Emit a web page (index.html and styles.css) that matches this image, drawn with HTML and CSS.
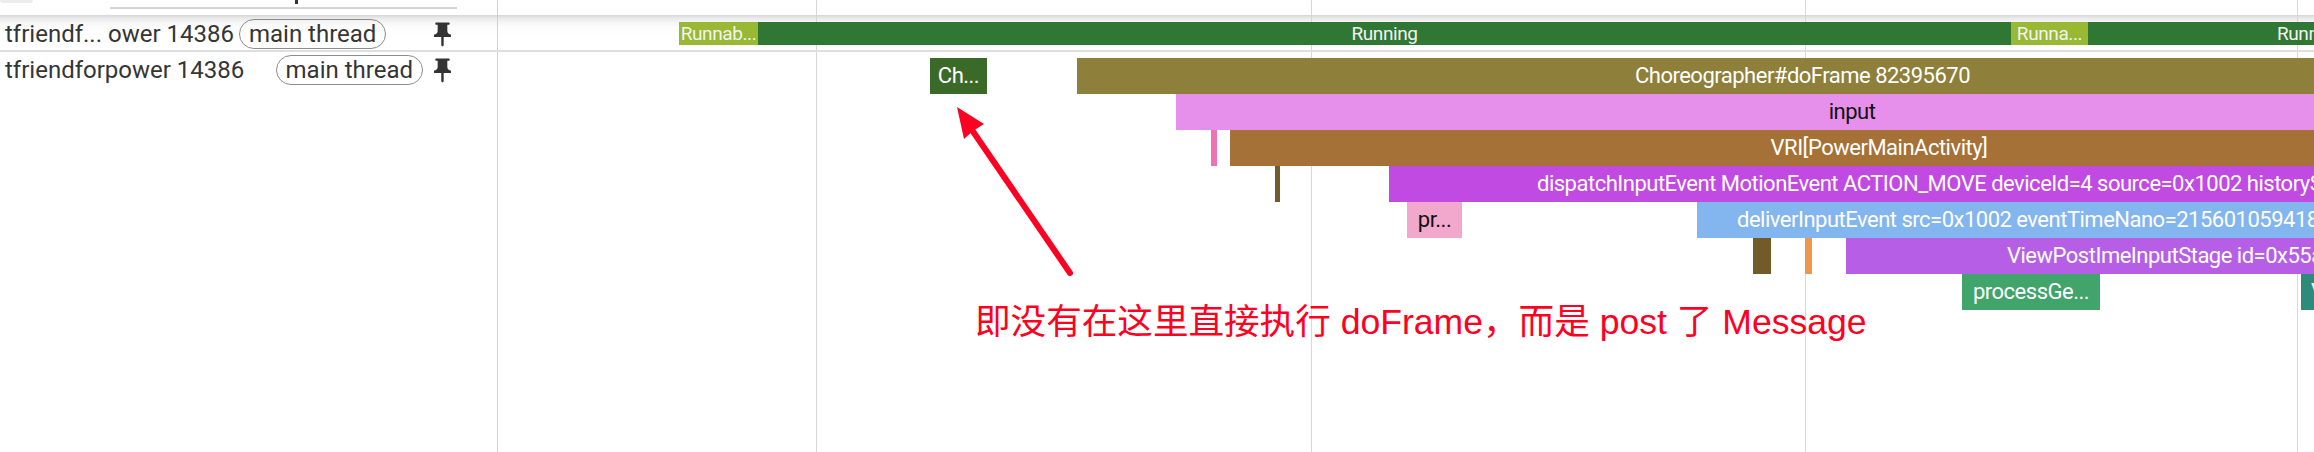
FILE: index.html
```html
<!DOCTYPE html>
<html>
<head>
<meta charset="utf-8">
<title>Perfetto trace</title>
<link rel="stylesheet" href="styles.css">
</head>
<body>
<div class="page">
  <div class="topbar">
    <div class="top-shell">
      <div class="tab-stub"></div>
      <div class="header-rule"><span class="glyph-stub"></span></div>
    </div>
    <div class="top-track grid"></div>
  </div>

  <div class="row pinned">
    <div class="shell">
      <span class="title">tfriendf... ower 14386</span>
      <span class="chip">main thread</span>
      <svg class="pin" viewBox="0 0 24 24"><path d="M16 9V4h1c.55 0 1-.45 1-1s-.45-1-1-1H7c-.55 0-1 .45-1 1s.45 1 1 1h1v5c0 1.66-1.34 3-3 3v2h5.970v7l1 1 1-1v-7H19v-2c-1.66 0-3-1.34-3-3z"/></svg>
    </div>
    <div class="track grid">
      <div class="state runnable" style="left:181px;width:79px">Runnab...</div>
      <div class="state running" style="left:260px;width:1253px">Running</div>
      <div class="state runnable" style="left:1513px;width:77px">Runna...</div>
      <div class="state running" style="left:1590px;width:444px">Running</div>
    </div>
  </div>

  <div class="row thread">
    <div class="shell">
      <div class="shell-head">
        <span class="title">tfriendforpower 14386</span>
        <span class="chip">main thread</span>
        <svg class="pin" viewBox="0 0 24 24"><path d="M16 9V4h1c.55 0 1-.45 1-1s-.45-1-1-1H7c-.55 0-1 .45-1 1s.45 1 1 1h1v5c0 1.66-1.34 3-3 3v2h5.97v7l1 1 1-1v-7H19v-2c-1.66 0-3-1.34-3-3z"/></svg>
      </div>
    </div>
    <div class="track grid">
      <div class="slice d0 c-ch" style="left:432px;width:57px">Ch...</div>
      <div class="slice d0 c-doframe" style="left:579px;width:1451px">Choreographer#doFrame 82395670</div>

      <div class="slice d1 c-input" style="left:678px;width:1352px">input</div>

      <div class="slice d2 c-pink" style="left:713px;width:6px"></div>
      <div class="slice d2 c-vri" style="left:732px;width:1298px">VRI[PowerMainActivity]</div>

      <div class="slice d3 c-brown" style="left:777px;width:5px"></div>
      <div class="slice d3 c-dispatch start" style="left:891px;width:1800px;padding-left:148px">dispatchInputEvent MotionEvent ACTION_MOVE deviceId=4 source=0x1002 historySize=0</div>

      <div class="slice d4 c-pr" style="left:909px;width:55px">pr...</div>
      <div class="slice d4 c-deliver start" style="left:1199px;width:1300px;padding-left:40px">deliverInputEvent src=0x1002 eventTimeNano=215601059418000</div>

      <div class="slice d5 c-brown" style="left:1255px;width:18px"></div>
      <div class="slice d5 c-orange" style="left:1307px;width:7px"></div>
      <div class="slice d5 c-viewpost start" style="left:1348px;width:1000px;padding-left:161px">ViewPostImeInputStage id=0x55a3c1</div>

      <div class="slice d6 c-process" style="left:1464px;width:138px">processGe...</div>
      <div class="slice d6 c-teal start" style="left:1803px;width:300px;padding-left:10px">ViewPostIme...</div>
    </div>
  </div>

  <svg class="annot" viewBox="0 0 2314 452">
    <line x1="1070" y1="273" x2="972" y2="130" class="shaft"/>
    <polygon class="head" points="957,107 984,124 973,131 964,139"/>
  </svg>
  <div class="note">即没有在这里直接执行 doFrame，而是 post 了 Message</div>
</div>
</body>
</html>
```

FILE: styles.css
```css
* { box-sizing: border-box; }
html, body { margin: 0; padding: 0; }
body {
  width: 2314px;
  height: 452px;
  overflow: hidden;
  background: #fff;
  font-family: Roboto, "Noto Sans", sans-serif;
  color: #353535;
}
.page {
  position: relative;
  width: 2314px;
  height: 452px;
  display: flex;
  flex-direction: column;
}
.grid {
  background-image: linear-gradient(to right,
    transparent 318px, #d8d8d8 318px, #d8d8d8 319px, transparent 319px,
    transparent 813px, #d8d8d8 813px, #d8d8d8 814px, transparent 814px,
    transparent 1307px, #d8d8d8 1307px, #d8d8d8 1308px, transparent 1308px,
    transparent 1799px, #d8d8d8 1799px, #d8d8d8 1800px, transparent 1800px);
}

/* top strip */
.topbar { height: 15px; display: flex; flex: none; }
.top-shell {
  width: 498px;
  flex: none;
  border-right: 1px solid #d0d0d0;
  display: flex;
  align-items: flex-start;
}
.tab-stub {
  width: 33px;
  height: 3px;
  background: #ececec;
  border-radius: 0 0 5px 5px;
  margin-right: 77px;
}
.header-rule {
  width: 347px;
  height: 9px;
  border-bottom: 2px solid #d4d4d4;
}
.glyph-stub {
  display: block;
  width: 3px;
  height: 4px;
  margin-left: 185px;
  background: #333;
}
.top-track { flex: 1; }

/* rows */
.row { display: flex; }
.pinned {
  height: 37px;
  flex: none;
  border-bottom: 2px solid #dedede;
  background: linear-gradient(#d6d6d6 0, #e9e9e9 3px, #f5f5f5 7px, #fcfcfc 12px, #fff 20px);
}
.thread { flex: 1; }
.shell {
  width: 498px;
  flex: none;
  border-right: 1px solid #d0d0d0;
  display: flex;
  align-items: center;
  padding: 3px 40px 0 5px;
}
.thread .shell { align-items: flex-start; padding-top: 0; }
.shell-head {
  width: 100%;
  height: 36px;
  display: flex;
  align-items: center;
}
.title {
  font-size: 24px;
  line-height: 28px;
  white-space: nowrap;
}
.chip {
  font-size: 24px;
  line-height: 28px;
  padding: 0 9px;
  border: 1.5px solid #8c8c8c;
  border-radius: 16px;
  white-space: nowrap;
  margin-left: 5px;
}
.thread .chip { margin-left: auto; }
.pin {
  width: 29px;
  height: 29px;
  flex: none;
  fill: #333;
  margin-left: auto;
}
.thread .pin { margin-left: 5px; }

.track {
  flex: 1;
  position: relative;
  overflow: hidden;
}

/* thread state bars */
.state {
  position: absolute;
  top: 7px;
  height: 23px;
  line-height: 23px;
  font-size: 19px;
  letter-spacing: -0.4px;
  color: #f2f2f2;
  text-align: center;
  white-space: nowrap;
  overflow: hidden;
}
.runnable { background: #99b934; }
.running { background: #2f7732; }

/* slices */
.slice {
  position: absolute;
  height: 36px;
  line-height: 36px;
  font-size: 22px;
  letter-spacing: -0.5px;
  color: #fff;
  text-align: center;
  white-space: nowrap;
  overflow: hidden;
}
.slice.start { text-align: left; }
.d0 { top: 6px; }
.d1 { top: 42px; }
.d2 { top: 78px; }
.d3 { top: 114px; }
.d4 { top: 150px; }
.d5 { top: 186px; }
.d6 { top: 222px; }

.c-ch { background: #3b6a28; }
.c-doframe { background: #8e7f3a; }
.c-input { background: #e690ec; color: #111; }
.c-pink { background: #ef72b4; }
.c-vri { background: #a67136; }
.c-brown { background: #735b29; }
.c-dispatch { background: #c14ae3; }
.c-pr { background: #f2a8cc; color: #111; }
.c-deliver { background: #83b5ee; }
.c-orange { background: #ec994f; }
.c-viewpost { background: #b65fe6; }
.c-process { background: #41a46a; }
.c-teal { background: #2e8a7b; }

/* annotation overlay */
.annot {
  position: absolute;
  left: 0;
  top: 0;
  width: 2314px;
  height: 452px;
  pointer-events: none;
}
.shaft {
  stroke: #fe0022;
  stroke-width: 6;
  stroke-linecap: round;
}
.head { fill: #fe0022; }
.note {
  position: absolute;
  left: 975px;
  top: 300px;
  font-family: "Liberation Sans", "Noto Sans CJK SC", sans-serif;
  font-size: 35.6px;
  line-height: 44px;
  color: #fe0022;
  white-space: nowrap;
}
```
